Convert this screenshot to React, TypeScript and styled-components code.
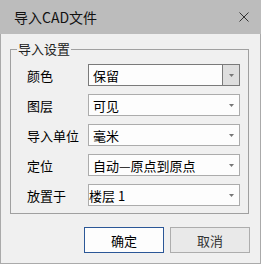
import styled, { createGlobalStyle } from "styled-components";

const GlobalStyle = createGlobalStyle`
  html, body {
    margin: 0;
    padding: 0;
    background: #f0f0f0;
  }
  * {
    box-sizing: border-box;
  }
`;

const Window = styled.div`
  width: 261px;
  height: 264px;
  display: flex;
  flex-direction: column;
  font-family: "Noto Sans CJK SC", "Microsoft YaHei", sans-serif;
  color: #000;
`;

const TitleBar = styled.div`
  height: 34px;
  flex: none;
  background: #bcbcbc;
  display: flex;
  align-items: center;
  justify-content: space-between;
  padding: 0 12px 0 14px;
  font-size: 14px;
  color: #111;
`;

const CloseButton = styled.div`
  width: 10px;
  height: 10px;
  display: flex;
`;

const Body = styled.div`
  flex: 1;
  border: 1px solid #aaaaaa;
  border-top: none;
  background: #f0f0f0;
  display: flex;
  flex-direction: column;
  padding: 15px 10px 10px 9px;
`;

const Group = styled.div`
  position: relative;
  width: 239px;
  border: 1px solid #a0a0a0;
  padding: 14px 8px 7px 16px;
  display: flex;
  flex-direction: column;
  gap: 8px;
`;

const Legend = styled.span`
  position: absolute;
  top: -10px;
  left: 6px;
  padding: 0 1px;
  background: #f0f0f0;
  font-size: 13px;
  line-height: 18px;
  color: #222;
`;

const Row = styled.div`
  display: flex;
  align-items: center;
  height: 22px;
`;

const Label = styled.span`
  width: 61px;
  font-size: 13px;
`;

const Combo = styled.div<{ $active?: boolean; $flush?: boolean }>`
  width: 152px;
  height: 22px;
  display: flex;
  align-items: center;
  background: #fdfdfd;
  border: 1px solid ${(p) => (p.$active ? "#7a7a7a" : "#acacac")};
  font-size: 13px;
  padding-left: ${(p) => (p.$flush ? "0" : "4px")};
`;

const ComboText = styled.span`
  flex: 1;
  white-space: nowrap;
`;

const DropButton = styled.div<{ $active?: boolean }>`
  width: 17px;
  height: 100%;
  display: flex;
  align-items: center;
  justify-content: center;
  background: ${(p) => (p.$active ? "#dedede" : "transparent")};
  border-left: 1px solid ${(p) => (p.$active ? "#7a7a7a" : "transparent")};
`;

const Buttons = styled.div`
  display: flex;
  justify-content: flex-end;
  gap: 6px;
  margin-top: 13px;
`;

const Button = styled.div<{ $primary?: boolean }>`
  width: 80px;
  height: 26px;
  display: flex;
  align-items: center;
  justify-content: center;
  font-size: 13px;
  background: ${(p) => (p.$primary ? "#fdfdfd" : "#e9e9e9")};
  border: 1px solid ${(p) => (p.$primary ? "#2b5797" : "#adadad")};
  color: ${(p) => (p.$primary ? "#000" : "#333")};
`;

const Arrow = () => (
  <svg width="5" height="3" viewBox="0 0 5 3">
    <polygon points="0,0 5,0 2.5,3" fill="#777" />
  </svg>
);

const fields = [
  { label: "颜色", value: "保留", active: true },
  { label: "图层", value: "可见" },
  { label: "导入单位", value: "毫米" },
  { label: "定位", value: "自动—原点到原点" },
  { label: "放置于", value: "楼层 1", flush: true },
];

export default function App() {
  return (
    <>
      <GlobalStyle />
      <Window>
        <TitleBar>
          <span>导入CAD文件</span>
          <CloseButton>
            <svg width="10" height="10" viewBox="0 0 10 10">
              <path d="M0.5 0.5 L9.5 9.5 M9.5 0.5 L0.5 9.5" stroke="#333" strokeWidth="1" />
            </svg>
          </CloseButton>
        </TitleBar>
        <Body>
          <Group>
            <Legend>导入设置</Legend>
            {fields.map((f) => (
              <Row key={f.label}>
                <Label>{f.label}</Label>
                <Combo $active={f.active} $flush={f.flush}>
                  <ComboText>{f.value}</ComboText>
                  <DropButton $active={f.active}>
                    <Arrow />
                  </DropButton>
                </Combo>
              </Row>
            ))}
          </Group>
          <Buttons>
            <Button $primary>确定</Button>
            <Button>取消</Button>
          </Buttons>
        </Body>
      </Window>
    </>
  );
}
